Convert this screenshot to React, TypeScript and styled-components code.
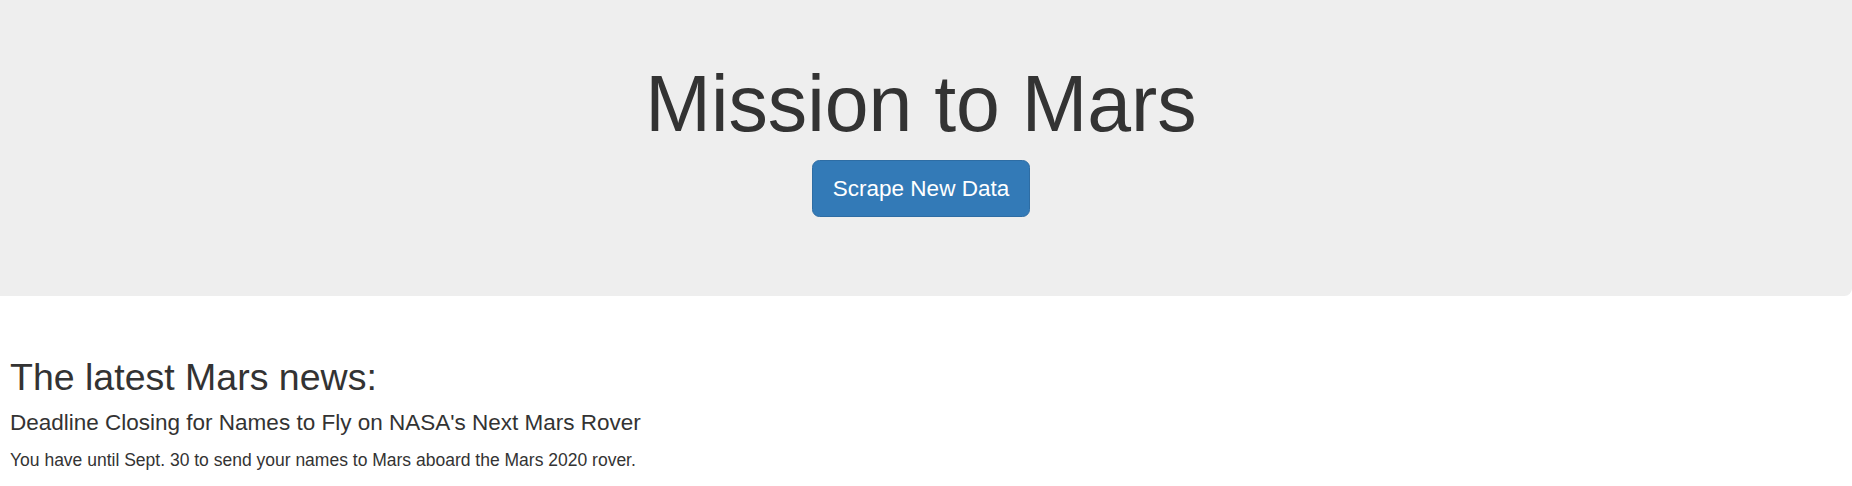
import React from "react";
import styled, { createGlobalStyle } from "styled-components";

const GlobalStyle = createGlobalStyle`
  html, body {
    margin: 0;
    padding: 0;
    background: #ffffff;
  }
  body {
    font-family: "Liberation Sans", Arial, Helvetica, sans-serif;
    font-size: 17.5px;
    line-height: 1.42857;
    color: #333333;
  }
  * { box-sizing: border-box; }
`;

const Page = styled.div`
  display: flex;
  flex-direction: column;
`;

const Jumbotron = styled.section`
  background: #eeeeee;
  padding: 61px 85px 60px 75px;
  margin-bottom: 37.5px;
  border-radius: 0 0 7.5px 0;
  text-align: center;
`;

const Title = styled.h1`
  margin: 0 0 12.5px;
  font-size: 78.75px;
  line-height: 1.1;
  font-weight: 400;
  color: #333333;
`;

const ButtonRow = styled.p`
  margin: 0 0 18.75px;
  display: flex;
  justify-content: center;
`;

const PrimaryButton = styled.a`
  display: inline-block;
  padding: 12.5px 20px;
  font-size: 22.5px;
  line-height: 30px;
  color: #ffffff;
  background-color: #337ab7;
  border: 1.25px solid #2e6da4;
  border-radius: 7.5px;
  text-decoration: none;
  cursor: pointer;
  white-space: nowrap;
`;

const News = styled.section`
  padding: 0 10px;
`;

const SectionHeading = styled.h2`
  margin: 24px 0 12.5px;
  font-size: 37.5px;
  line-height: 1.1;
  font-weight: 400;
  color: #333333;
`;

const NewsTitle = styled.h4`
  margin: 12.5px 0;
  font-size: 22.5px;
  line-height: 1.1;
  font-weight: 400;
  color: #333333;
`;

const NewsBody = styled.p`
  margin: 0 0 12.5px;
  font-size: 17.5px;
  line-height: 25px;
  color: #333333;
`;

export default function App() {
  return (
    <>
      <GlobalStyle />
      <Page>
        <Jumbotron>
          <Title>Mission to Mars</Title>
          <ButtonRow>
            <PrimaryButton role="button">Scrape New Data</PrimaryButton>
          </ButtonRow>
        </Jumbotron>
        <News>
          <SectionHeading>The latest Mars news:</SectionHeading>
          <NewsTitle>Deadline Closing for Names to Fly on NASA's Next Mars Rover</NewsTitle>
          <NewsBody>
            You have until Sept. 30 to send your names to Mars aboard the Mars 2020 rover.
          </NewsBody>
        </News>
      </Page>
    </>
  );
}
